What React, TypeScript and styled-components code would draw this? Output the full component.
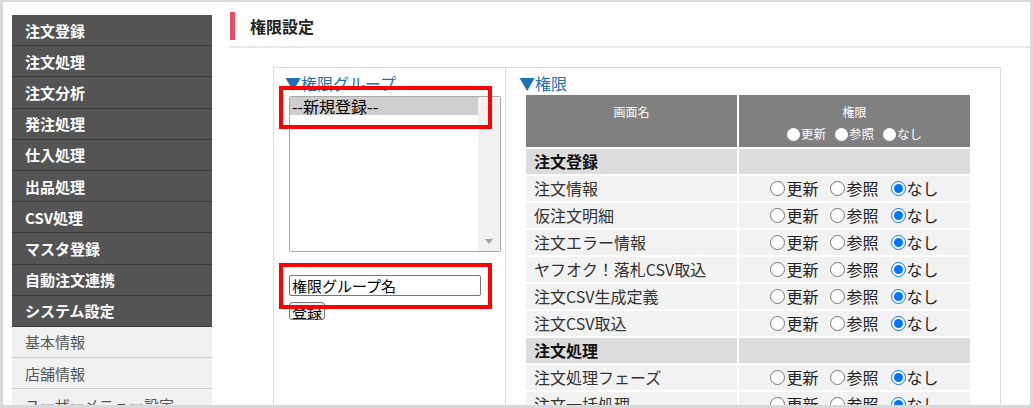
import React from 'react';
import styled, {createGlobalStyle} from 'styled-components';

const menu = ['注文登録', '注文処理', '注文分析', '発注処理', '仕入処理', '出品処理', 'CSV処理', 'マスタ登録', '自動注文連携', 'システム設定']
const subMenu = ['基本情報', '店舗情報', 'ユーザーメニュー設定', '権限設定']

interface IRow {
    name: string
    section?: boolean
}

const rows: IRow[] = [
    {name: '注文登録', section: true},
    {name: '注文情報'},
    {name: '仮注文明細'},
    {name: '注文エラー情報'},
    {name: 'ヤフオク！落札CSV取込'},
    {name: '注文CSV生成定義'},
    {name: '注文CSV取込'},
    {name: '注文処理', section: true},
    {name: '注文処理フェーズ'},
    {name: '注文一括処理'},
    {name: '注文検索'},
]

const levels = ['更新', '参照', 'なし']

const App = () => {
    return (
        <>
            <GlobalStyle/>
            <Frame>
                <Sidebar>
                    {menu.map(m => <MenuItem key={m}>{m}</MenuItem>)}
                    {subMenu.map(m => <MenuItem key={m} $sub>{m}</MenuItem>)}
                </Sidebar>
                <Main>
                    <Header>
                        <Title>権限設定</Title>
                    </Header>
                    <Panel>
                        <LeftCol>
                            <SectionLabel $indent={-4}>▼権限グループ</SectionLabel>
                            <ListBox>
                                <Options>
                                    <Option $selected>--新規登録--</Option>
                                </Options>
                                <ScrollBar>
                                    <Arrow $up/>
                                    <Arrow/>
                                </ScrollBar>
                            </ListBox>
                            <NameInput type="text" value="権限グループ名" readOnly/>
                            <SmallButton type="button">登録</SmallButton>
                        </LeftCol>
                        <RightCol>
                            <SectionLabel $indent={13}>▼権限</SectionLabel>
                            <Table>
                                <thead>
                                <tr>
                                    <HeadCell $w={211}>画面名</HeadCell>
                                    <HeadCell $w={231}>
                                        権限
                                        <Legend>
                                            {levels.map(l => <LegendItem key={l}><Dot/>{l}</LegendItem>)}
                                        </Legend>
                                    </HeadCell>
                                </tr>
                                </thead>
                                <tbody>
                                {rows.map((r, i) => (
                                    <tr key={r.name + i}>
                                        <NameCell $section={r.section}>{r.name}</NameCell>
                                        <RadioCell $section={r.section}>
                                            {!r.section &&
                                                <RadioGroup>
                                                    {levels.map(l => (
                                                        <RadioLabel key={l}>
                                                            <Radio type="radio" name={'row' + i}
                                                                   defaultChecked={l === 'なし'}/>
                                                            {l}
                                                        </RadioLabel>
                                                    ))}
                                                </RadioGroup>}
                                        </RadioCell>
                                    </tr>
                                ))}
                                </tbody>
                            </Table>
                        </RightCol>
                        <RedBox $top={18} $height={43}/>
                        <RedBox $top={195} $height={46}/>
                    </Panel>
                </Main>
            </Frame>
        </>
    )
}

export default App;

const GlobalStyle = createGlobalStyle`
  html, body {
    margin: 0;
    padding: 0;
    background: #fff;
  }

  body {
    font-family: "Noto Sans CJK JP", "Noto Sans", sans-serif;
    color: #333;
  }

  * {
    box-sizing: border-box;
  }
`

const Frame = styled.div`
  width: 1033px;
  height: 408px;
  border: 3px solid #d9d9d9;
  border-top-width: 2px;
  display: flex;
  overflow: hidden;
  background: #fff;
`

const Sidebar = styled.nav`
  width: 200px;
  flex: none;
  margin: 13px 0 0 9px;
`

const MenuItem = styled.div<{ $sub?: boolean }>`
  height: 31.2px;
  padding-left: 13px;
  display: flex;
  align-items: center;
  font-size: 15px;
  font-weight: ${({$sub}) => $sub ? 400 : 700};
  color: ${({$sub}) => $sub ? '#555' : '#fff'};
  background: ${({$sub}) => $sub ? '#f1f1f1' : '#545454'};
  border-bottom: 1px solid ${({$sub}) => $sub ? '#cfcfcf' : '#3a3a3a'};
  white-space: nowrap;
`

const Main = styled.main`
  flex: 1;
  min-width: 0;
  margin-left: 18px;
  padding-top: 10px;
`

const Header = styled.div`
  padding-bottom: 6px;
  border-bottom: 2px solid #e8e8e8;
`

const Title = styled.h1`
  margin: 0;
  height: 28px;
  border-left: 5px solid #ec4a63;
  padding-left: 15px;
  display: flex;
  align-items: center;
  font-size: 16px;
  font-weight: 700;
  color: #222;
`

const Panel = styled.div`
  position: relative;
  width: 728px;
  height: 400px;
  margin: 19px 0 0 43px;
  border: 1px solid #dcdcdc;
  display: flex;
`

const LeftCol = styled.div`
  width: 232px;
  flex: none;
  border-right: 1px solid #dcdcdc;
  padding: 5px 0 0 15px;
`

const RightCol = styled.div`
  flex: 1;
  padding-top: 5px;
`

const SectionLabel = styled.div<{ $indent: number }>`
  margin-left: ${({$indent}) => $indent}px;
  font-size: 16px;
  line-height: 20px;
  color: #2170b5;
`

const ListBox = styled.div`
  margin-top: 3px;
  width: 212px;
  height: 156px;
  border: 1px solid #a9a9a9;
  border-radius: 2px;
  display: flex;
  overflow: hidden;
`

const Options = styled.div`
  flex: 1;
`

const Option = styled.div<{ $selected?: boolean }>`
  height: 18px;
  padding-left: 2px;
  font-size: 16px;
  line-height: 18px;
  color: #000;
  background: ${({$selected}) => $selected ? '#cecece' : 'transparent'};
`

const ScrollBar = styled.div`
  width: 22px;
  background: #f1f1f1;
  display: flex;
  flex-direction: column;
  justify-content: space-between;
  align-items: center;
  padding: 8px 0 7px;
`

const Arrow = styled.span<{ $up?: boolean }>`
  width: 0;
  height: 0;
  border-left: 4px solid transparent;
  border-right: 4px solid transparent;
  ${({$up}) => $up
          ? 'border-bottom: 4px solid #dcdcdc;'
          : 'border-top: 5px solid #a3a3a3;'}
`

const NameInput = styled.input`
  display: block;
  margin-top: 23px;
  width: 192px;
  height: 21px;
  border: 1px solid #767676;
  border-radius: 2px;
  padding: 0 2px;
  font-family: "Noto Sans CJK JP", sans-serif;
  font-size: 15px;
  color: #000;
  outline: none;
`

const SmallButton = styled.button`
  display: block;
  margin-top: 6px;
  height: 18px;
  padding: 0 2px;
  font-family: "Noto Sans CJK JP", sans-serif;
  font-size: 15px;
  line-height: 15px;
  color: #000;
  background: #efefef;
  border: 1px solid #767676;
  border-radius: 3px;
`

const Table = styled.table`
  margin-left: 18px;
  border-collapse: separate;
  border-spacing: 2px;
`

const HeadCell = styled.th<{ $w: number }>`
  width: ${({$w}) => $w}px;
  height: 52px;
  padding: 8px 0 0;
  vertical-align: top;
  background: #808080;
  color: #fff;
  font-size: 12px;
  font-weight: 400;
  line-height: 18px;
  text-align: center;
`

const Legend = styled.div`
  margin-top: 4px;
  display: flex;
  justify-content: center;
  gap: 9px;
`

const LegendItem = styled.span`
  display: inline-flex;
  align-items: center;
  font-size: 12.5px;
`

const Dot = styled.span`
  width: 13px;
  height: 13px;
  border-radius: 50%;
  background: #fff;
  margin-right: 1px;
`

const NameCell = styled.td<{ $section?: boolean }>`
  height: 25px;
  padding: 0 8px;
  font-size: 16px;
  line-height: 25px;
  font-weight: ${({$section}) => $section ? 700 : 400};
  color: ${({$section}) => $section ? '#111' : '#333'};
  background: ${({$section}) => $section ? '#dcdcdc' : '#f2f2f2'};
  white-space: nowrap;
`

const RadioCell = styled.td<{ $section?: boolean }>`
  height: 25px;
  padding: 0;
  background: ${({$section}) => $section ? '#dcdcdc' : '#f2f2f2'};
`

const RadioGroup = styled.div`
  display: flex;
  justify-content: center;
  gap: 12px;
`

const RadioLabel = styled.label`
  display: inline-flex;
  align-items: center;
  font-size: 16px;
  line-height: 25px;
  color: #222;
`

const Radio = styled.input`
  width: 15px;
  height: 15px;
  margin: 0 1px 0 0;
`

const RedBox = styled.div<{ $top: number, $height: number }>`
  position: absolute;
  left: 5px;
  top: ${({$top}) => $top}px;
  width: 213px;
  height: ${({$height}) => $height}px;
  border: 4px solid #ff0000;
  pointer-events: none;
`
